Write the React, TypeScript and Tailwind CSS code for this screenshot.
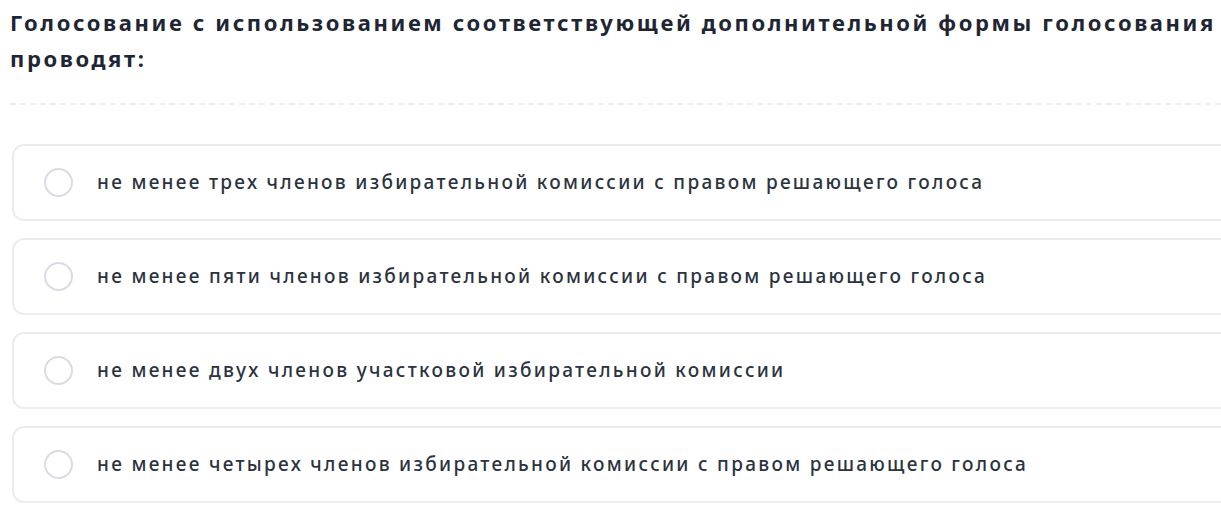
import React from "react";

const options = [
  "не менее трех членов избирательной комиссии с правом решающего голоса",
  "не менее пяти членов избирательной комиссии с правом решающего голоса",
  "не менее двух членов участковой избирательной комиссии",
  "не менее четырех членов избирательной комиссии с правом решающего голоса",
];

export default function App() {
  return (
    <div
      className="min-h-[529px] w-full overflow-hidden bg-white"
      style={{ fontFamily: "'Noto Sans', sans-serif" }}
    >
      <div className="pl-[10px]">
        <h1 className="pt-[4px] text-[22px] font-bold leading-[36px] tracking-[2.6px] text-[#1f2633]">
          Голосование с использованием соответствующей дополнительной формы голосования проводят:
        </h1>
        <div className="mt-[27px] border-t-2 border-dashed border-[#eeeeee]" />
        <div className="mt-[39px] mr-[-30px] ml-[2px] flex flex-col gap-[17px]">
          {options.map((text) => (
            <label
              key={text}
              className="flex h-[77px] cursor-pointer items-center rounded-[12px] border-2 border-[#ececec] bg-white pl-[30px]"
            >
              <span className="h-[29px] w-[29px] shrink-0 rounded-full border-2 border-[#d9dde3] bg-white" />
              <span className="ml-[24px] text-[19px] font-medium tracking-[2.3px] text-[#2b3340]">
                {text}
              </span>
            </label>
          ))}
        </div>
      </div>
    </div>
  );
}
